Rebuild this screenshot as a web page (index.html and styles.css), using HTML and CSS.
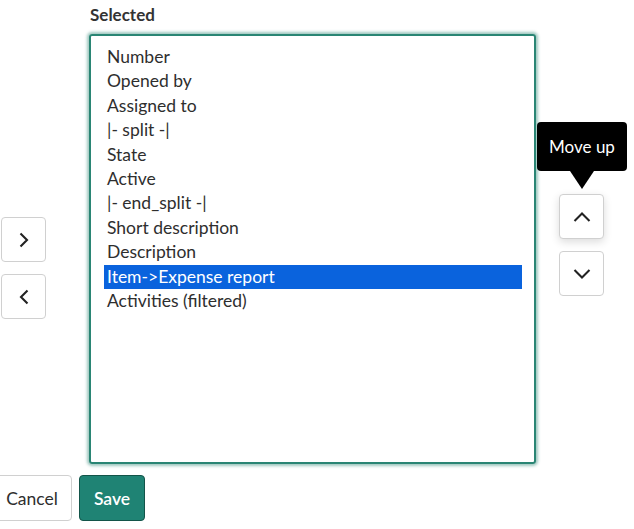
FILE: index.html
```html
<!DOCTYPE html>
<html>
<head>
<meta charset="utf-8">
<link rel="stylesheet" href="styles.css">
</head>
<body>
<div class="picker">
  <div class="col-left">
    <button class="icon-btn" aria-label="Add"><svg width="16" height="16" viewBox="0 0 16 16"><path d="M4.5 1.5 L11 8 L4.5 14.5" fill="none" stroke="#222" stroke-width="2.1"/></svg></button>
    <button class="icon-btn" aria-label="Remove"><svg width="16" height="16" viewBox="0 0 16 16"><path d="M11.5 1.5 L5 8 L11.5 14.5" fill="none" stroke="#222" stroke-width="2.1"/></svg></button>
  </div>
  <div class="col-main">
    <div class="label">Selected</div>
    <div class="listbox">
      <div class="opt">Number</div>
      <div class="opt">Opened by</div>
      <div class="opt">Assigned to</div>
      <div class="opt">|- split -|</div>
      <div class="opt">State</div>
      <div class="opt">Active</div>
      <div class="opt">|- end_split -|</div>
      <div class="opt">Short description</div>
      <div class="opt">Description</div>
      <div class="opt sel">Item-&gt;Expense report</div>
      <div class="opt">Activities (filtered)</div>
    </div>
  </div>
  <div class="col-right">
    <div class="btn-wrap">
      <div class="tooltip">Move up</div>
      <button class="icon-btn hover" aria-label="Move up"><svg width="20" height="20" viewBox="0 0 20 20"><path d="M2.5 14 L10 6.5 L17.5 14" fill="none" stroke="#222" stroke-width="2.1"/></svg></button>
    </div>
    <button class="icon-btn" aria-label="Move down"><svg width="20" height="20" viewBox="0 0 20 20"><path d="M2.5 6 L10 13.5 L17.5 6" fill="none" stroke="#222" stroke-width="2.1"/></svg></button>
  </div>
</div>
<div class="footer">
  <button class="btn cancel">Cancel</button>
  <button class="btn save">Save</button>
</div>
</body>
</html>
```
FILE: styles.css
```css
html, body { margin: 0; padding: 0; background: #fff; }
body { font-family: "Lato", "Noto Sans", sans-serif; color: #2e2e2e; font-size: 17.5px; }
.picker { display: flex; align-items: flex-start; padding-top: 4px; }
.col-left { width: 45px; margin-left: 1px; margin-top: 213px; display: flex; flex-direction: column; gap: 12px; }
.col-main { margin-left: 43px; width: 447px; }
.col-right { margin-left: 23px; margin-top: 190px; display: flex; flex-direction: column; gap: 12px; }
.label { font-weight: 700; font-size: 17px; color: #333; margin-left: 1px; height: 22px; line-height: 22px; }
.listbox { margin-top: 8px; height: 430px; border: 2px solid #2a8574; border-radius: 3px; box-shadow: 0 0 3px 2px rgba(42,133,116,0.45); padding: 9px 12px 0 13px; box-sizing: border-box; }
.opt { line-height: 24.4px; height: 24.4px; padding-left: 3px; white-space: nowrap; }
.opt.sel { background: #0a63dd; color: #fff; }
.icon-btn { width: 45px; height: 45px; background: #fff; border: 1px solid #d0d0d0; border-radius: 4px; display: flex; align-items: center; justify-content: center; padding: 0; }
.icon-btn.hover { box-shadow: 0 3px 8px rgba(0,0,0,0.14); }
.btn-wrap { position: relative; }
.tooltip { position: absolute; left: -22px; top: -72px; width: 90px; height: 49px; background: #000; color: #fff; border-radius: 4px; font-size: 17px; display: flex; align-items: center; justify-content: center; }
.tooltip::after { content: ""; position: absolute; left: 33px; top: 49px; border-left: 12px solid transparent; border-right: 12px solid transparent; border-top: 18px solid #000; width: 0; height: 0; }
.footer { display: flex; gap: 7px; margin-top: 11px; margin-left: -8px; }
.btn { font-family: inherit; font-size: 17.5px; height: 46px; border-radius: 4px; padding: 0; }
.cancel { background: #fff; border: 1px solid #d0d0d0; color: #2e2e2e; width: 80px; }
.save { background: #1f8374; border: 1px solid #135449; color: #fff; width: 66px; font-weight: 600; }
```
